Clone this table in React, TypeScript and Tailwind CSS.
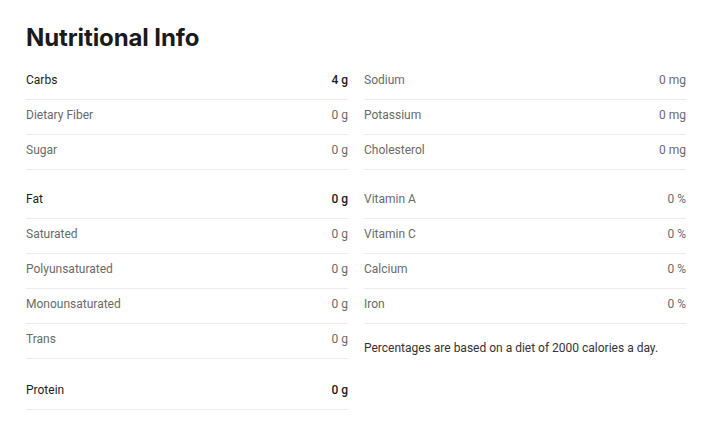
import React from "react";

type Row = { label: string; value: string; main?: boolean };

const left: Row[][] = [
  [
    { label: "Carbs", value: "4 g", main: true },
    { label: "Dietary Fiber", value: "0 g" },
    { label: "Sugar", value: "0 g" },
  ],
  [
    { label: "Fat", value: "0 g", main: true },
    { label: "Saturated", value: "0 g" },
    { label: "Polyunsaturated", value: "0 g" },
    { label: "Monounsaturated", value: "0 g" },
    { label: "Trans", value: "0 g" },
  ],
  [{ label: "Protein", value: "0 g", main: true }],
];

const right: Row[][] = [
  [
    { label: "Sodium", value: "0 mg" },
    { label: "Potassium", value: "0 mg" },
    { label: "Cholesterol", value: "0 mg" },
  ],
  [
    { label: "Vitamin A", value: "0 %" },
    { label: "Vitamin C", value: "0 %" },
    { label: "Calcium", value: "0 %" },
    { label: "Iron", value: "0 %" },
  ],
];

function RowView({ r }: { r: Row }) {
  return (
    <div className="flex justify-between items-start pt-[7px] pb-[11px] border-b border-[#ececec] leading-[16px] text-[12px]">
      <span className={r.main ? "text-[#1c1c1c]" : "text-[#6a6a6a]"}>{r.label}</span>
      <span className={r.main ? "text-[#1c1c1c] font-medium" : "text-[#6a6a6a]"}>{r.value}</span>
    </div>
  );
}

export default function App() {
  return (
    <div className="bg-white w-[722px] h-[427px] pl-[26px] pt-[24px]" style={{ fontFamily: "Roboto, 'Liberation Sans', sans-serif" }}>
      <h1
        className="text-[24px] font-bold leading-[28px] text-[#1a1a1a] tracking-[-0.1px]"
        style={{ fontFamily: "Inter, 'Noto Sans', sans-serif" }}
      >
        Nutritional Info
      </h1>
      <div className="flex gap-[16px] mt-[13px]">
        <div className="w-[322px] flex flex-col">
          <div>{left[0].map((r) => <RowView key={r.label} r={r} />)}</div>
          <div className="mt-[14px]">{left[1].map((r) => <RowView key={r.label} r={r} />)}</div>
          <div className="mt-[16px]">{left[2].map((r) => <RowView key={r.label} r={r} />)}</div>
        </div>
        <div className="w-[322px] flex flex-col">
          <div>{right[0].map((r) => <RowView key={r.label} r={r} />)}</div>
          <div className="mt-[14px]">{right[1].map((r) => <RowView key={r.label} r={r} />)}</div>
          <p className="mt-[16px] text-[12px] leading-[16px] text-[#333333]">
            Percentages are based on a diet of 2000 calories a day.
          </p>
        </div>
      </div>
    </div>
  );
}
